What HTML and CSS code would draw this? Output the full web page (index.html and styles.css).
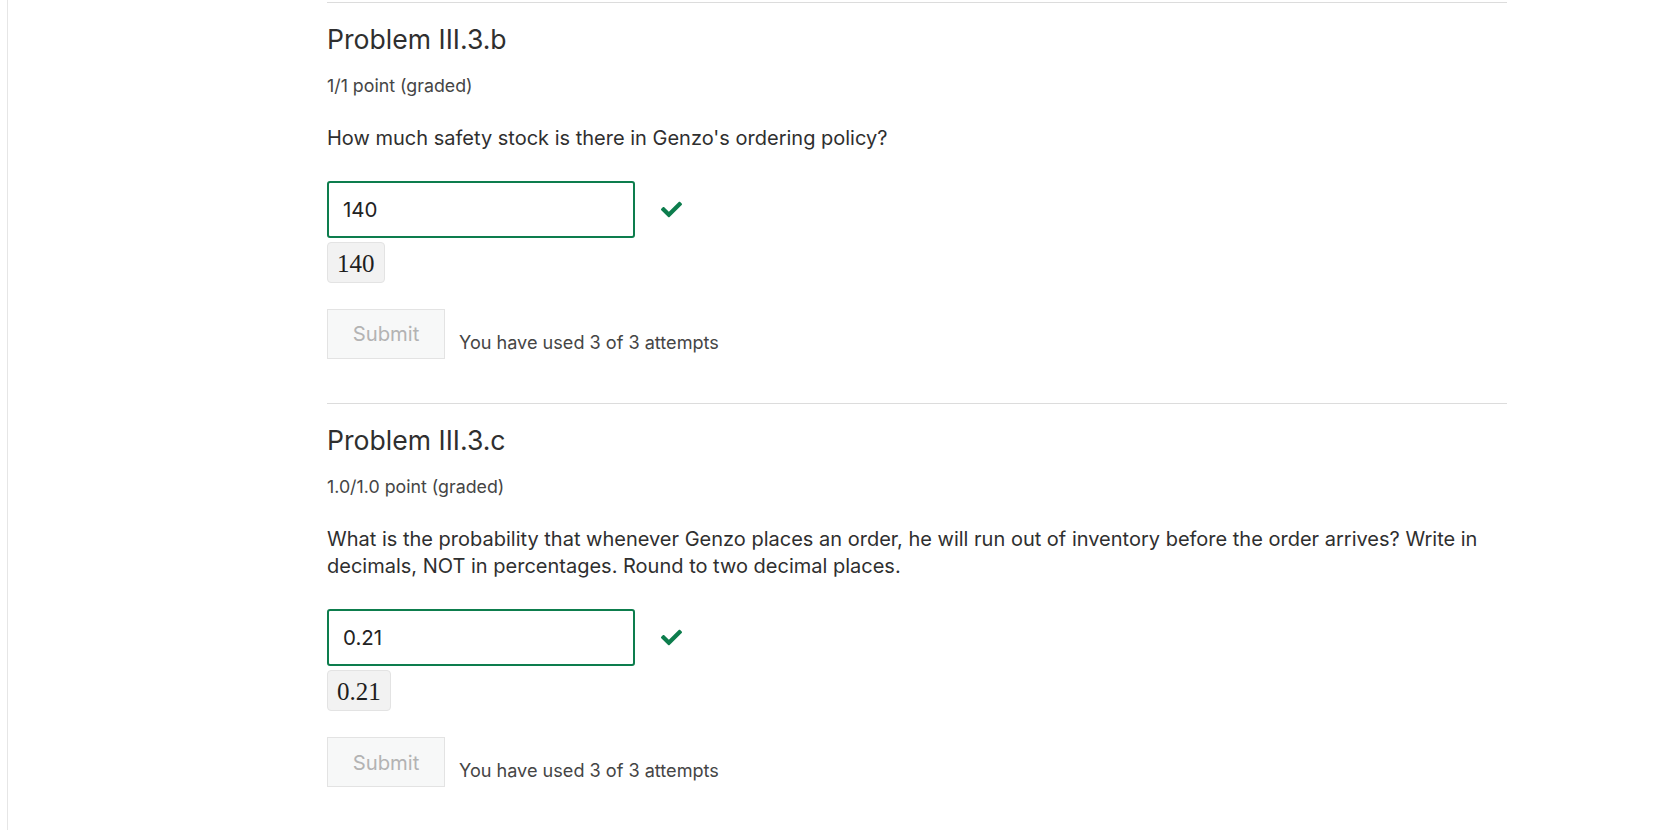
FILE: index.html
```html
<!DOCTYPE html>
<html lang="en">
<head>
<meta charset="utf-8">
<title>Problems</title>
<link rel="stylesheet" href="styles.css">
</head>
<body>
<div class="page">
  <main class="content">
    <section class="problem">
      <h3 class="title">Problem III.3.b</h3>
      <div class="points">1/1 point (graded)</div>
      <p class="question">How much safety stock is there in Genzo's ordering policy?</p>
      <div class="answer-row">
        <input class="answer" type="text" value="140" readonly>
        <span class="check"><svg viewBox="0 0 512 512" width="21" height="21" aria-hidden="true"><path fill="currentColor" d="M173.898 439.404l-166.4-166.4c-9.997-9.997-9.997-26.206 0-36.204l36.203-36.204c9.997-9.998 26.207-9.998 36.204 0L192 312.69 432.095 72.596c9.997-9.997 26.207-9.997 36.204 0l36.203 36.204c9.997 9.997 9.997 26.206 0 36.204l-294.4 294.401c-9.998 9.997-26.207 9.997-36.204-.001z"/></svg></span>
      </div>
      <div class="preview">140</div>
      <div class="actions">
        <button class="submit" type="button" disabled>Submit</button>
        <span class="attempts">You have used 3 of 3 attempts</span>
      </div>
    </section>
    <section class="problem">
      <h3 class="title">Problem III.3.c</h3>
      <div class="points">1.0/1.0 point (graded)</div>
      <p class="question">What is the probability that whenever Genzo places an order, he will run out of inventory before the order arrives? Write in decimals, NOT in percentages. Round to two decimal places.</p>
      <div class="answer-row">
        <input class="answer" type="text" value="0.21" readonly>
        <span class="check"><svg viewBox="0 0 512 512" width="21" height="21" aria-hidden="true"><path fill="currentColor" d="M173.898 439.404l-166.4-166.4c-9.997-9.997-9.997-26.206 0-36.204l36.203-36.204c9.997-9.998 26.207-9.998 36.204 0L192 312.69 432.095 72.596c9.997-9.997 26.207-9.997 36.204 0l36.203 36.204c9.997 9.997 9.997 26.206 0 36.204l-294.4 294.401c-9.998 9.997-26.207 9.997-36.204-.001z"/></svg></span>
      </div>
      <div class="preview">0.21</div>
      <div class="actions">
        <button class="submit" type="button" disabled>Submit</button>
        <span class="attempts">You have used 3 of 3 attempts</span>
      </div>
    </section>
  </main>
</div>
</body>
</html>
```

FILE: styles.css
```css
html, body {
  margin: 0;
  padding: 0;
  background: #ffffff;
}

body {
  font-family: Inter, "Open Sans", "Liberation Sans", sans-serif;
  color: #313131;
  height: 830px;
  overflow: hidden;
}

.page {
  padding-left: 7px;
  height: 100%;
}

.content {
  border-left: 1px solid #e6e6e6;
  height: 100%;
  padding-left: 319px;
  padding-top: 2px;
  box-sizing: border-box;
}

.problem {
  width: 1180px;
  border-top: 1px solid #dcdcdc;
  padding-top: 21px;
  margin-bottom: 44px;
}

.title {
  margin: 0;
  font-size: 26.6px;
  line-height: 31px;
  font-weight: 400;
  color: #2f2f2f;
}

.points {
  margin-top: 19px;
  font-size: 17.8px;
  line-height: 24px;
  color: #454545;
}

.question {
  margin: 27px 0 0;
  font-size: 20px;
  line-height: 27.7px;
  color: #2f2f2f;
}

.answer-row {
  display: flex;
  align-items: center;
  margin-top: 28px;
}

.answer {
  width: 308px;
  height: 57px;
  box-sizing: border-box;
  border: 2px solid #0d7d4d;
  border-radius: 3px;
  padding: 0 14px;
  font-family: Inter, "Open Sans", "Liberation Sans", sans-serif;
  font-size: 20.5px;
  color: #222222;
  background: #ffffff;
  outline: none;
}

.check {
  display: inline-flex;
  margin-left: 26px;
  color: #0d7d4d;
}

.preview {
  display: inline-block;
  margin-top: 4px;
  padding: 0 9px;
  height: 41px;
  line-height: 41px;
  box-sizing: border-box;
  background: #f2f2f2;
  border: 1px solid #e3e3e3;
  border-radius: 4px;
  font-family: "Liberation Serif", "DejaVu Serif", serif;
  font-size: 25px;
  color: #1e1e1e;
}

.actions {
  display: flex;
  align-items: flex-end;
  margin-top: 26px;
}

.submit {
  width: 118px;
  height: 50px;
  box-sizing: border-box;
  background: #f7f8f8;
  border: 1px solid #e3e3e3;
  border-radius: 0;
  font-family: Inter, "Open Sans", "Liberation Sans", sans-serif;
  font-size: 20.3px;
  color: #b3b3b3;
  padding: 0;
}

.attempts {
  margin-left: 14px;
  font-size: 18.1px;
  line-height: 24px;
  padding-bottom: 5px;
  color: #454545;
}
```
